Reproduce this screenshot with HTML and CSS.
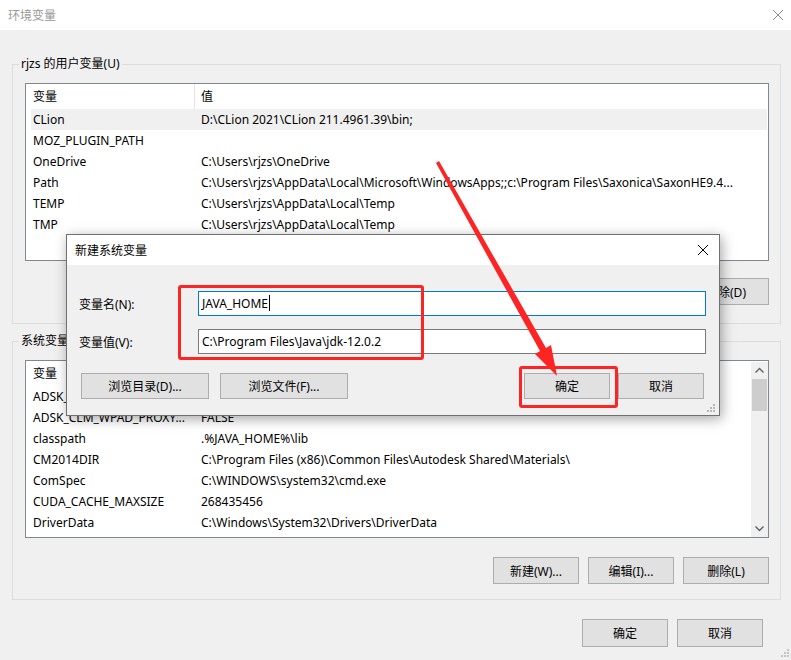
FILE: index.html
```html
<!DOCTYPE html>
<html lang="zh-CN">
<head>
    <meta charset="UTF-8">
    <title>环境变量</title>
    <link rel="stylesheet" href="styles.css">
</head>
<body>
<div class="window">
    <div class="titlebar">
        <span class="title">环境变量</span>
        <svg class="close" width="10" height="10" viewBox="0 0 10 10"><path d="M0 0L10 10M10 0L0 10" stroke="#8a8a8a" stroke-width="1"/></svg>
    </div>

    <fieldset class="group user">
        <legend>rjzs 的用户变量(U)</legend>
        <div class="list">
            <div class="list-head"><span class="h-name">变量</span><span class="h-val">值</span></div>
            <div class="row selected"><span class="name">CLion</span><span class="val">D:\CLion 2021\CLion 211.4961.39\bin;</span></div>
            <div class="row"><span class="name">MOZ_PLUGIN_PATH</span><span class="val"></span></div>
            <div class="row"><span class="name">OneDrive</span><span class="val">C:\Users\rjzs\OneDrive</span></div>
            <div class="row"><span class="name">Path</span><span class="val">C:\Users\rjzs\AppData\Local\Microsoft\WindowsApps;;c:\Program Files\Saxonica\SaxonHE9.4...</span></div>
            <div class="row"><span class="name">TEMP</span><span class="val">C:\Users\rjzs\AppData\Local\Temp</span></div>
            <div class="row"><span class="name">TMP</span><span class="val">C:\Users\rjzs\AppData\Local\Temp</span></div>
        </div>
        <div class="btn-row">
            <button class="btn">新建(N)...</button>
            <button class="btn">编辑(E)...</button>
            <button class="btn">删除(D)</button>
        </div>
    </fieldset>

    <fieldset class="group system">
        <legend>系统变量(S)</legend>
        <div class="list scroll">
            <div class="list-inner">
                <div class="list-head"><span class="h-name">变量</span><span class="h-val"></span></div>
                <div class="row"><span class="name">ADSK_</span><span class="val"></span></div>
                <div class="row"><span class="name">ADSK_CLM_WPAD_PROXY...</span><span class="val">FALSE</span></div>
                <div class="row"><span class="name">classpath</span><span class="val">.%JAVA_HOME%\lib</span></div>
                <div class="row"><span class="name">CM2014DIR</span><span class="val">C:\Program Files (x86)\Common Files\Autodesk Shared\Materials\</span></div>
                <div class="row"><span class="name">ComSpec</span><span class="val">C:\WINDOWS\system32\cmd.exe</span></div>
                <div class="row"><span class="name">CUDA_CACHE_MAXSIZE</span><span class="val">268435456</span></div>
                <div class="row"><span class="name">DriverData</span><span class="val">C:\Windows\System32\Drivers\DriverData</span></div>
            </div>
            <div class="vscroll">
                <svg class="arrow-btn" width="17" height="17" viewBox="0 0 17 17"><path d="M4.5 10.5L8.5 6.5L12.5 10.5" fill="none" stroke="#606060" stroke-width="1.4"/></svg>
                <div class="thumb"></div>
                <div class="track"></div>
                <svg class="arrow-btn" width="17" height="17" viewBox="0 0 17 17"><path d="M4.5 6.5L8.5 10.5L12.5 6.5" fill="none" stroke="#606060" stroke-width="1.4"/></svg>
            </div>
        </div>
        <div class="btn-row">
            <button class="btn">新建(W)...</button>
            <button class="btn">编辑(I)...</button>
            <button class="btn">删除(L)</button>
        </div>
    </fieldset>

    <div class="footer">
        <button class="btn tall">确定</button>
        <button class="btn tall">取消</button>
    </div>
    <svg class="grip main-grip" width="9" height="9" viewBox="0 0 9 9"><path d="M6 0h2v2h-2zM3 3h2v2h-2zM6 3h2v2h-2zM0 6h2v2h-2zM3 6h2v2h-2zM6 6h2v2h-2z" fill="#c4c4c4"/></svg>

    <!-- the child dialog, opened over the window -->
    <div class="dialog">
        <div class="dlg-title">
            <span>新建系统变量</span>
            <svg width="10" height="10" viewBox="0 0 10 10"><path d="M0 0L10 10M10 0L0 10" stroke="#000" stroke-width="1"/></svg>
        </div>
        <div class="dlg-body">
            <div class="field">
                <label>变量名(N):</label>
                <div class="input focus">JAVA_HOME<span class="caret"></span></div>
            </div>
            <div class="field">
                <label>变量值(V):</label>
                <div class="input">C:\Program Files\Java\jdk-12.0.2</div>
            </div>
            <div class="dlg-buttons">
                <button class="btn wide">浏览目录(D)...</button>
                <button class="btn wide">浏览文件(F)...</button>
                <button class="btn ok">确定</button>
                <button class="btn">取消</button>
            </div>
        </div>
        <svg class="grip dlg-grip" width="9" height="9" viewBox="0 0 9 9"><path d="M6 0h2v2h-2zM3 3h2v2h-2zM6 3h2v2h-2zM0 6h2v2h-2zM3 6h2v2h-2zM6 6h2v2h-2z" fill="#b8b8b8"/></svg>
    </div>

    <!-- red annotations -->
    <div class="mark mark-fields"></div>
    <div class="mark mark-ok"></div>
    <svg class="annot" width="791" height="660" viewBox="0 0 791 660">
        <polygon points="436,163 439,161 546,348 551,345 557,376 535,354 540,351" fill="#fd2424"/>
    </svg>
</div>
</body>
</html>
```

FILE: styles.css
```css
* {
    box-sizing: border-box;
}
body {
    margin: 0;
    font-family: "Noto Sans", "Noto Sans CJK SC", sans-serif;
    font-size: 12px;
    color: #000;
    background-color: #f0f0f0;
}
.window {
    position: relative;
    width: 791px;
    height: 660px;
    background-color: #f0f0f0;
    overflow: hidden;
}
.titlebar {
    height: 30px;
    background-color: #fff;
    display: flex;
    align-items: center;
    justify-content: space-between;
    padding: 0 8px;
}
.title {
    color: #999;
}

/* group boxes */
.group {
    margin: 26px 10px 0 12px;
    border: 1px solid #dcdcdc;
    padding: 11px 11px 18px 12px;
    min-width: 0;
}
.group legend {
    padding: 0 2px;
    margin-left: -6px;
    line-height: 16px;
    height: 16px;
}
.group.system {
    margin-top: 9px;
    padding-bottom: 15px;
}

/* list views */
.list {
    background-color: #fff;
    border: 1px solid #828790;
    height: 178px;
    overflow: hidden;
}
.list.scroll {
    display: flex;
}
.list-inner {
    flex: 1;
    min-width: 0;
}
.list-head {
    display: flex;
    height: 25px;
    line-height: 25px;
    white-space: nowrap;
}
.h-name {
    width: 169px;
    padding-left: 7px;
    border-right: 1px solid #e5e5e5;
}
.h-val {
    padding-left: 6px;
}
.row {
    display: flex;
    height: 21px;
    line-height: 21px;
    margin: 0 1px 0 5px;
    white-space: nowrap;
    overflow: hidden;
}
.row.selected {
    background-color: #f0f0f0;
}
.name {
    width: 170px;
    flex-shrink: 0;
    padding: 0 6px 0 2px;
    overflow: hidden;
    text-overflow: ellipsis;
}
.val {
    flex: 1;
    min-width: 0;
    padding-right: 10px;
    overflow: hidden;
    text-overflow: ellipsis;
}
.vscroll {
    width: 17px;
    margin-top: 1px;
    display: flex;
    flex-direction: column;
    background-color: #f0f0f0;
}
.arrow-btn {
    display: block;
    flex-shrink: 0;
}
.thumb {
    height: 32px;
    margin: 0 1px;
    background-color: #cdcdcd;
}
.track {
    flex: 1;
}

/* buttons */
.btn {
    font: inherit;
    color: #000;
    width: 86px;
    height: 27px;
    padding: 0;
    background-color: #e1e1e1;
    border: 1px solid #adadad;
    border-radius: 0;
}
.btn.tall {
    height: 28px;
}
.btn-row {
    display: flex;
    justify-content: flex-end;
    gap: 9px;
    margin-top: 17px;
}
.system .btn-row {
    margin-top: 19px;
}
.footer {
    display: flex;
    justify-content: flex-end;
    gap: 9px;
    margin-top: 19px;
    padding-right: 28px;
}
.grip {
    position: absolute;
    display: block;
}
.main-grip {
    right: 1px;
    bottom: 2px;
}

/* new variable dialog */
.dialog {
    position: absolute;
    left: 66px;
    top: 234px;
    width: 654px;
    height: 182px;
    background-color: #f0f0f0;
    border: 1px solid #707070;
    box-shadow: 2px 3px 12px rgba(0,0,0,0.35);
}
.dlg-title {
    height: 30px;
    background-color: #fff;
    display: flex;
    align-items: center;
    justify-content: space-between;
    padding: 0 11px 0 8px;
}
.dlg-body {
    padding: 26px 13px 0 12px;
}
.field {
    display: flex;
    align-items: center;
    height: 25px;
}
.field + .field {
    margin-top: 13px;
}
.field label {
    width: 119px;
    flex-shrink: 0;
}
.input {
    flex: 1;
    height: 25px;
    line-height: 23px;
    padding-left: 3px;
    background-color: #fff;
    border: 1px solid #7a7a7a;
    white-space: nowrap;
}
.input.focus {
    border-color: #0078d7;
}
.caret {
    display: inline-block;
    width: 1px;
    height: 16px;
    margin-left: 1px;
    vertical-align: -3px;
    background-color: #000;
}
.dlg-buttons {
    display: flex;
    gap: 11px;
    margin-top: 19px;
    padding: 0 2px;
}
.dlg-buttons .btn {
    height: 26px;
}
.btn.wide {
    width: 128px;
}
.btn.ok {
    margin-left: auto;
    margin-right: -3px;
}
.dlg-grip {
    right: 3px;
    bottom: 2px;
}

/* red annotations */
.mark {
    position: absolute;
    border: 3px solid #fd2424;
    border-radius: 3px;
}
.mark-fields {
    left: 178px;
    top: 285px;
    width: 246px;
    height: 75px;
}
.mark-ok {
    left: 519px;
    top: 366px;
    width: 99px;
    height: 42px;
}
.annot {
    position: absolute;
    left: 0;
    top: 0;
    pointer-events: none;
}
```
